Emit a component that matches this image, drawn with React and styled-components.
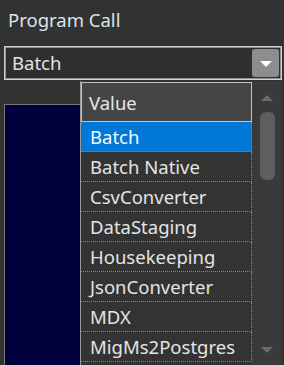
import React from 'react';
import styled, { createGlobalStyle } from 'styled-components';

const GlobalStyle = createGlobalStyle`
	html, body {
		margin: 0;
		padding: 0;
		background: #323232;
	}
	body {
		font-family: 'Noto Sans', 'Open Sans', sans-serif;
		font-size: 18.5px;
		color: #e2e2e2;
	}
`;

const items = [
	'Batch',
	'Batch Native',
	'CsvConverter',
	'DataStaging',
	'Housekeeping',
	'JsonConverter',
	'MDX',
	'MigMs2Postgres',
];

const Page = styled.div`
	position: relative;
	height: 365px;
	overflow: hidden;
	padding: 0 2px 0 4px;
	display: flex;
	flex-direction: column;
`;

const Label = styled.div`
	padding: 7px 0 0 4px;
	height: 33px;
	line-height: 26px;
	color: #dde3ea;
`;

const Combo = styled.div`
	margin-top: 6px;
	height: 34px;
	box-sizing: border-box;
	border: 1px solid #d2d2d2;
	box-shadow: inset 0 0 0 1px #8f8f8f;
	background: #2f2f2f;
	display: flex;
	align-items: center;
	padding: 0 2px 0 7px;
`;

const ComboText = styled.span`
	flex: 1;
	line-height: 28px;
`;

const DropButton = styled.div`
	width: 27px;
	height: 28px;
	border-radius: 3px;
	background: #8d8d8d;
	display: flex;
	align-items: center;
	justify-content: center;

	&::after {
		content: '';
		width: 0;
		height: 0;
		border-left: 6px solid transparent;
		border-right: 6px solid transparent;
		border-top: 6px solid #ffffff;
		margin-top: 2px;
	}
`;

const NavyPanel = styled.div`
	margin-top: 24px;
	flex: 1;
	box-sizing: border-box;
	border: 1px solid #777777;
	border-bottom: none;
	background: #00003c;
`;

const Popup = styled.div`
	position: absolute;
	left: 80px;
	right: 2px;
	top: 81px;
	height: 290px;
	display: grid;
	grid-template-columns: 1fr 30px;
	background: #333333;
	border-left: 1px solid #9a9a9a;
`;

const List = styled.div`
	display: flex;
	flex-direction: column;
	padding-top: 1px;
`;

const Header = styled.div`
	height: 40px;
	box-sizing: border-box;
	border: 1px solid #c4c4c4;
	background: #454545;
	padding-left: 7px;
	display: flex;
	align-items: center;
	color: #e6e6e6;
`;

const Row = styled.div`
	height: 30px;
	box-sizing: border-box;
	border-bottom: 1px dotted #8a8a8a;
	border-right: 1px dotted #8a8a8a;
	padding-left: 9px;
	display: flex;
	align-items: center;
	background: ${({ selected }) => (selected ? '#0078d7' : '#333333')};
	color: ${({ selected }) => (selected ? '#f4f8fc' : '#e4e4e4')};
	white-space: nowrap;
`;

const ScrollBar = styled.div`
	background: #3a3a3a;
	display: flex;
	flex-direction: column;
	align-items: center;
	padding-top: 14px;
`;

const Arrow = styled.div`
	width: 0;
	height: 0;
	border-left: 6px solid transparent;
	border-right: 6px solid transparent;
	${({ up }) =>
		up ? 'border-bottom: 6px solid #6c6c6c' : 'border-top: 6px solid #6c6c6c'};
`;

const Thumb = styled.div`
	margin-top: 11px;
	width: 15px;
	height: 68px;
	border-radius: 6px;
	background: #5e5e5e;
`;

const Spacer = styled.div`
	flex: 1;
`;

const BottomArrow = styled.div`
	margin-bottom: 18px;
`;

function App() {
	return (
		<>
			<GlobalStyle />
			<Page>
				<Label>Program Call</Label>
				<Combo>
					<ComboText>Batch</ComboText>
					<DropButton />
				</Combo>
				<NavyPanel />
				<Popup>
					<List>
						<Header>Value</Header>
						{items.map((item, i) => (
							<Row key={item} selected={i === 0}>
								{item}
							</Row>
						))}
					</List>
					<ScrollBar>
						<Arrow up />
						<Thumb />
						<Spacer />
						<BottomArrow>
							<Arrow />
						</BottomArrow>
					</ScrollBar>
				</Popup>
			</Page>
		</>
	);
}

export default App;
